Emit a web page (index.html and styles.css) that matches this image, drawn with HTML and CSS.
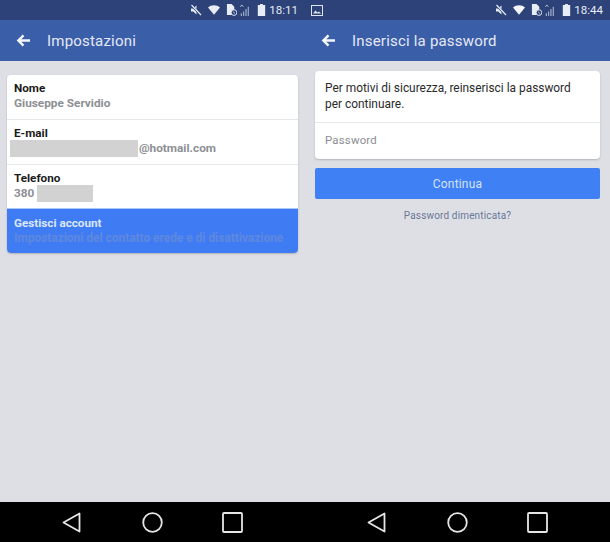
FILE: index.html
```html
<!DOCTYPE html>
<html lang="it">
<head>
  <meta charset="UTF-8">
  <meta name="viewport" content="width=device-width, initial-scale=1.0">
  <title>Impostazioni</title>
  <link rel="stylesheet" href="styles.css">
</head>
<body>
  <div class="screens">
    <!-- impostazioni -->
    <section class="phone">
      <div class="status-bar">
        <svg class="ic-mute" viewBox="0 0 12 12"><path d="M1 4.500h2.200L6.500 1.500v9L3.200 7.500H1z" fill="#e8ecf4"/><path d="M1 1l10 10" stroke="#2c4279" stroke-width="2.400"/><path d="M1.500 1l9.500 10" stroke="#e8ecf4" stroke-width="1.200"/></svg>
        <svg class="ic-wifi" viewBox="0 0 14 11"><path d="M0 2.500C4-.8 10-.8 14 2.500L7 11z" fill="#e8ecf4"/></svg>
        <svg class="ic-file" viewBox="0 0 12 13"><path d="M1 0h5l3 3v9H1z" fill="#e8ecf4"/><circle cx="8.700" cy="9.300" r="3.100" fill="#2c4279" stroke="#e8ecf4" stroke-width="1"/><path d="M7.500 8.200l2.300 2.200" stroke="#e8ecf4" stroke-width=".8"/></svg>
        <svg class="ic-signal" viewBox="0 0 11 13"><path d="M1 13V10M3.500 13V8M6 13V5.500M8.500 13V3" stroke="#a9b5d0" stroke-width="1.200"/><path d="M0 3l1.500-2 1.500 2" fill="none" stroke="#e8ecf4" stroke-width=".8"/></svg>
        <svg class="ic-batt" viewBox="0 0 8 13"><path d="M2.500 0h3v1.200H8V13H0V1.200h2.500z" fill="#e8ecf4"/></svg>
        <span class="clock">18:11</span>
      </div>
      <header class="title-bar">
        <svg class="ic-back" viewBox="0 0 16 14"><path d="M15 7H3M8 1.500L2.500 7 8 12.500" fill="none" stroke="#f4f6fb" stroke-width="2.600"/></svg>
        <h1>Impostazioni</h1>
      </header>
      <main class="content content-left">
        <div class="card">
          <div class="row">
            <div class="row-label">Nome</div>
            <div class="row-value">Giuseppe Servidio</div>
          </div>
          <div class="row">
            <div class="row-label">E-mail</div>
            <div class="row-value"><span class="redact redact-mail"></span>@hotmail.com</div>
          </div>
          <div class="row">
            <div class="row-label">Telefono</div>
            <div class="row-value">380<span class="redact redact-phone"></span></div>
          </div>
          <div class="row row-active">
            <div class="row-label">Gestisci account</div>
            <div class="row-value">Impostazioni del contatto erede e di disattivazione</div>
          </div>
        </div>
      </main>
      <nav class="nav-bar">
        <svg class="nav-back" viewBox="0 0 19 21"><path d="M17.500 1.500v18L1.500 10.500z" fill="none" stroke="#e6e6e6" stroke-width="1.800" stroke-linejoin="round"/></svg>
        <svg class="nav-home" viewBox="0 0 21 21"><circle cx="10.500" cy="10.500" r="9.300" fill="none" stroke="#e6e6e6" stroke-width="1.800"/></svg>
        <svg class="nav-recent" viewBox="0 0 21 21"><rect x="1" y="1" width="19" height="19" rx="1" fill="none" stroke="#e6e6e6" stroke-width="1.800"/></svg>
      </nav>
    </section>

    <!-- password -->
    <section class="phone">
      <div class="status-bar">
        <svg class="ic-photo" viewBox="0 0 12 11"><rect x=".5" y=".5" width="11" height="10" fill="#2c4279" stroke="#dfe4ee"/><path d="M2 8.500l2.500-3 2 2 1.500-1 2 2z" fill="#dfe4ee"/></svg>
        <svg class="ic-mute" viewBox="0 0 12 12"><path d="M1 4.500h2.200L6.500 1.500v9L3.200 7.500H1z" fill="#e8ecf4"/><path d="M1 1l10 10" stroke="#2c4279" stroke-width="2.400"/><path d="M1.500 1l9.500 10" stroke="#e8ecf4" stroke-width="1.200"/></svg>
        <svg class="ic-wifi" viewBox="0 0 14 11"><path d="M0 2.500C4-.8 10-.8 14 2.500L7 11z" fill="#f4f6fb"/></svg>
        <svg class="ic-file" viewBox="0 0 12 13"><path d="M1 0h5l3 3v9H1z" fill="#e8ecf4"/><circle cx="8.700" cy="9.300" r="3.100" fill="#2c4279" stroke="#e8ecf4" stroke-width="1"/><path d="M7.500 8.200l2.300 2.200" stroke="#e8ecf4" stroke-width=".8"/></svg>
        <svg class="ic-signal" viewBox="0 0 11 13"><path d="M1 13V10M3.500 13V8M6 13V5.500M8.500 13V3" stroke="#a9b5d0" stroke-width="1.200"/><path d="M0 3l1.500-2 1.500 2" fill="none" stroke="#e8ecf4" stroke-width=".8"/></svg>
        <svg class="ic-batt" viewBox="0 0 8 13"><path d="M2.500 0h3v1.200H8V13H0V1.200h2.500z" fill="#e8ecf4"/></svg>
        <span class="clock">18:44</span>
      </div>
      <header class="title-bar">
        <svg class="ic-back" viewBox="0 0 16 14"><path d="M15 7H3M8 1.500L2.500 7 8 12.500" fill="none" stroke="#f4f6fb" stroke-width="2.600"/></svg>
        <h1>Inserisci la password</h1>
      </header>
      <main class="content content-right">
        <div class="card">
          <p class="card-msg">Per motivi di sicurezza, reinserisci la password per continuare.</p>
          <div class="card-input">Password</div>
        </div>
        <button class="btn-continue">Continua</button>
        <a class="forgot">Password dimenticata?</a>
      </main>
      <nav class="nav-bar">
        <svg class="nav-back" viewBox="0 0 19 21"><path d="M17.500 1.500v18L1.500 10.500z" fill="none" stroke="#e6e6e6" stroke-width="1.800" stroke-linejoin="round"/></svg>
        <svg class="nav-home" viewBox="0 0 21 21"><circle cx="10.500" cy="10.500" r="9.300" fill="none" stroke="#e6e6e6" stroke-width="1.800"/></svg>
        <svg class="nav-recent" viewBox="0 0 21 21"><rect x="1" y="1" width="19" height="19" rx="1" fill="none" stroke="#e6e6e6" stroke-width="1.800"/></svg>
      </nav>
    </section>
  </div>
</body>
</html>
```

FILE: styles.css
```css
* { margin: 0; padding: 0; box-sizing: border-box; }
html, body { height: 100%; }
body {
  font-family: Roboto, 'Liberation Sans', Arial, sans-serif;
  background-color: #dddfe5;
  overflow: hidden;
}
.screens {
  display: flex;
  width: 610px;
  height: 542px;
}
.phone {
  display: flex;
  flex-direction: column;
  width: 305px;
  height: 542px;
}
.status-bar {
  display: flex;
  align-items: center;
  height: 20px;
  padding: 0 7px 0 6px;
  background-color: #2c4279;
  flex-shrink: 0;
}
.status-bar svg { display: block; }
.ic-photo { width: 12px; height: 11px; margin-right: auto; }
.ic-mute { width: 12px; height: 12px; margin-left: auto; margin-right: 6px; }
.ic-photo + .ic-mute { margin-left: 0; }
.ic-wifi { width: 12px; height: 10px; margin-right: 6px; }
.ic-file { width: 11px; height: 12px; margin-right: 3px; }
.ic-signal { width: 11px; height: 12px; margin-right: 6px; }
.ic-batt { width: 9px; height: 12px; margin-right: 3px; }
.clock { font-size: 11.500px; color: #e8ecf4; }
.title-bar {
  display: flex;
  align-items: center;
  height: 41px;
  padding-left: 16px;
  background-color: #3b5ea9;
  flex-shrink: 0;
}
.ic-back { width: 15px; height: 13px; margin-right: 16px; }
.title-bar h1 {
  font-size: 15px;
  font-weight: 400;
  color: #e4e9f4;
  letter-spacing: .2px;
}
.content { flex: 1; }
.content-left { padding: 14px 7px 0; }
.content-right { padding: 10px 10px 0; }
.card {
  background-color: white;
  border-radius: 4px;
  box-shadow: 0 1px 2px rgba(0, 0, 0, 0.2);
  overflow: hidden;
}
.row {
  height: 45px;
  padding: 6px 7px 0;
  border-bottom: 1px solid #e6e7ea;
}
.row:nth-child(3) { height: 44px; border-bottom-color: #a9c6f7; }
.row:last-child { border-bottom: none; height: 44px; padding-top: 7px; }
.row-label {
  font-size: 11.700px;
  font-weight: 700;
  line-height: 15px;
  color: #1a1a1a;
}
.row-value {
  display: flex;
  align-items: center;
  height: 15px;
  font-size: 11.800px;
  font-weight: 700;
  line-height: 15px;
  color: #8d8f94;
  white-space: nowrap;
}
.redact {
  display: block;
  height: 17px;
  background-color: #d2d2d2;
  flex-shrink: 0;
}
.redact-mail { width: 128px; margin: 0 1px 0 -4px; }
.redact-phone { width: 56px; margin-left: 3px; }
.row-active { background-color: #3f7cf4; }
.row-active .row-label { color: #dce7fd; }
.row-active .row-value { color: #5f88de; font-size: 11.900px; }
.card-msg {
  padding: 9px 10px 0;
  height: 52px;
  font-size: 11.900px;
  line-height: 16px;
  color: #2a2a2a;
  border-bottom: 1px solid #e8e9ec;
}
.card-input {
  height: 36px;
  padding-left: 10px;
  font-size: 11.400px;
  line-height: 35px;
  color: #8b8d92;
  letter-spacing: .2px;
}
.btn-continue {
  display: block;
  width: 100%;
  height: 31px;
  margin-top: 9px;
  background-color: #4080f5;
  color: #d5e3fc;
  border: none;
  border-radius: 2px;
  font-family: inherit;
  font-size: 12px;
  font-weight: 400;
  letter-spacing: .2px;
}
.forgot {
  display: block;
  margin-top: 10px;
  text-align: center;
  font-size: 10px;
  line-height: 13px;
  color: #6a7796;
  letter-spacing: .15px;
}
.nav-bar {
  height: 40px;
  background-color: black;
  flex-shrink: 0;
  display: flex;
  align-items: center;
  padding-left: 62px;
}
.nav-back { width: 19px; height: 21px; margin-right: 61px; }
.nav-home { width: 21px; height: 21px; margin-right: 59px; }
.nav-recent { width: 21px; height: 21px; }
```
